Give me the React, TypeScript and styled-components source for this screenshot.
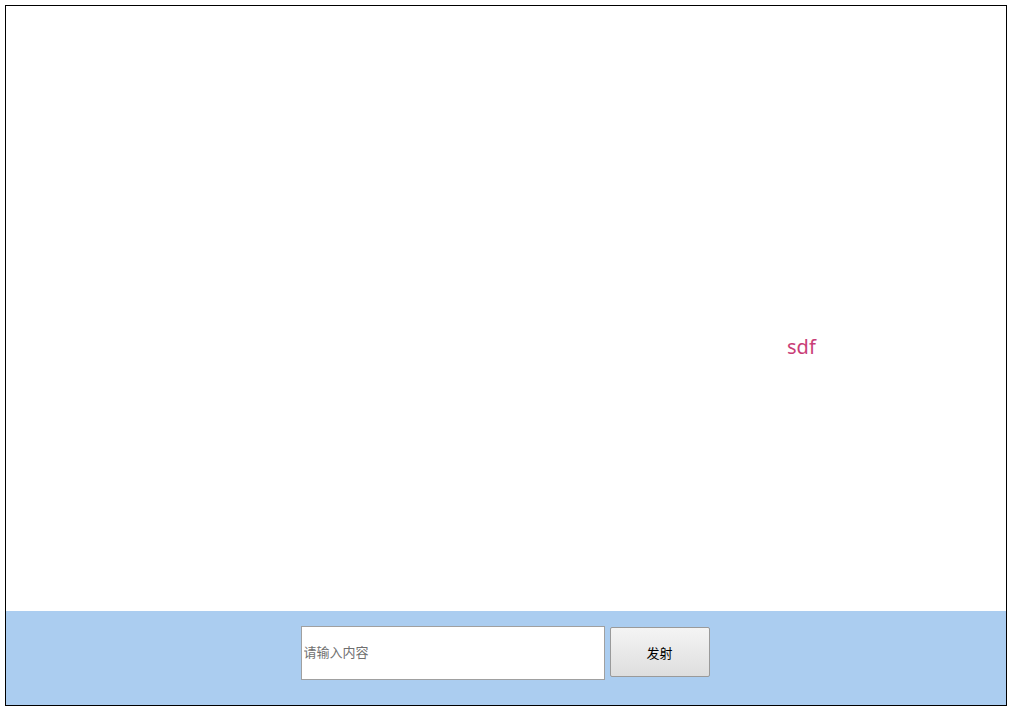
import { ReactElement } from 'react';
import styled, { createGlobalStyle } from 'styled-components';

const GlobalStyle = createGlobalStyle`
  html, body {
    margin: 0;
    padding: 0;
    background: #ffffff;
    font-family: "Noto Sans CJK SC", "Liberation Sans", sans-serif;
  }
  #root {
    padding: 5px 5px 0 5px;
  }
`;

const Frame = styled.div`
  display: flex;
  flex-direction: column;
  width: 1000px;
  height: 699px;
  border: 1px solid #000000;
  background: #ffffff;
`;

const Screen = styled.div`
  position: relative;
  flex: 1;
  overflow: hidden;
`;

const Bullet = styled.span<{ $color: string }>`
  position: absolute;
  white-space: nowrap;
  font-family: "Noto Sans", "Liberation Sans", sans-serif;
  font-size: 20px;
  line-height: 24px;
  color: ${(p) => p.$color};
`;

const Footer = styled.div`
  display: flex;
  justify-content: center;
  align-items: flex-start;
  gap: 5px;
  height: 94px;
  padding: 15px 2px 0 0;
  box-sizing: border-box;
  background: #abcdf0;
`;

const Input = styled.input`
  width: 304px;
  height: 54px;
  box-sizing: border-box;
  margin: 0;
  padding: 0 2px 3px;
  border: 1px solid #a0a0a0;
  background: #ffffff;
  font-family: "Noto Sans CJK SC", sans-serif;
  font-size: 13px;
  outline: none;

  &::placeholder {
    color: #6f6f6f;
  }
`;

const Button = styled.button`
  width: 100px;
  height: 50px;
  margin-top: 1px;
  box-sizing: border-box;
  border: 1px solid #9a9a9a;
  border-radius: 2px;
  background: linear-gradient(#f4f4f4, #dedede);
  font-family: "Noto Sans CJK SC", sans-serif;
  font-size: 13px;
  color: #000000;
  cursor: pointer;
`;

const bullets = [{ id: 1, text: 'sdf', left: 781, top: 329, color: '#c93d77' }];

function App(): ReactElement {
  return (
    <>
      <GlobalStyle />
      <Frame>
        <Screen>
          {bullets.map((b) => (
            <Bullet key={b.id} $color={b.color} style={{ left: b.left, top: b.top }}>
              {b.text}
            </Bullet>
          ))}
        </Screen>
        <Footer>
          <Input type="text" placeholder="请输入内容" />
          <Button>发射</Button>
        </Footer>
      </Frame>
    </>
  );
}

export default App;
